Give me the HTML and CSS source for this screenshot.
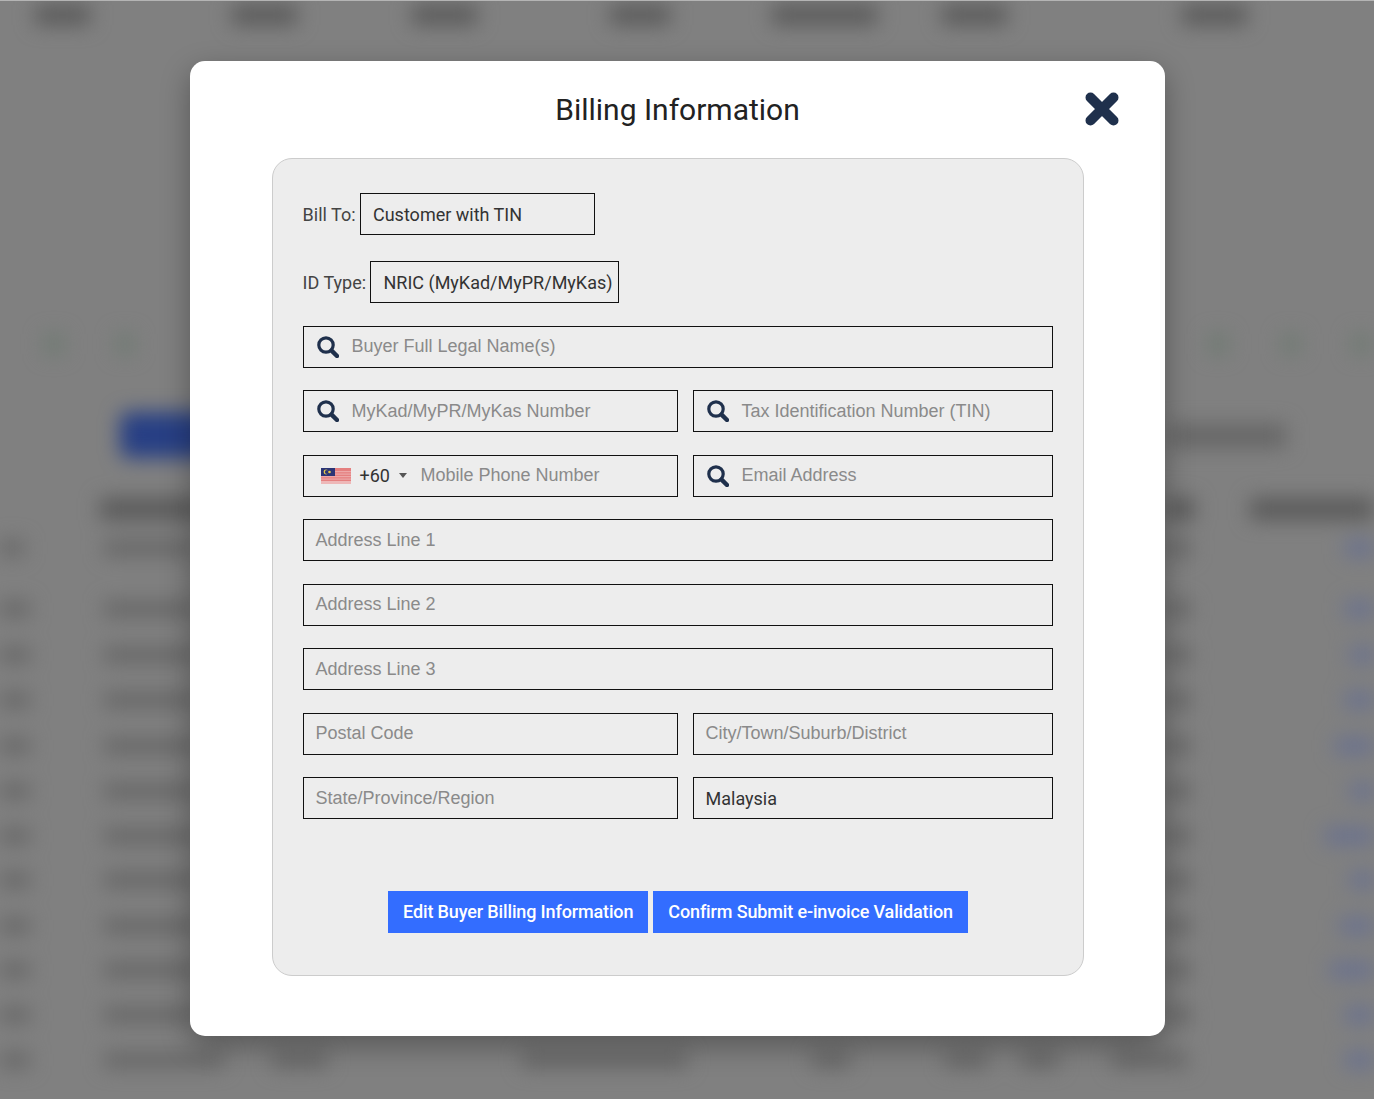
FILE: index.html
```html
<!DOCTYPE html>
<html lang="en">
<head>
<meta charset="utf-8">
<title>Billing Information</title>
<link rel="stylesheet" href="styles.css">
</head>
<body>
<svg class="backdrop" width="1374" height="1099" viewBox="0 0 1374 1099" aria-hidden="true">
  <defs>
    <filter id="soft" x="-10%" y="-10%" width="120%" height="120%" color-interpolation-filters="sRGB"><feGaussianBlur stdDeviation="10"/></filter>
  </defs>
  <rect width="1374" height="1099" fill="#808080"/>
  <g filter="url(#soft)">
    <g fill="#5a5a5a">
      <rect x="35" y="5" width="55" height="20"/><rect x="232" y="5" width="65" height="20"/><rect x="412" y="5" width="65" height="20"/><rect x="610" y="5" width="60" height="20"/><rect x="772" y="5" width="105" height="20"/><rect x="942" y="5" width="65" height="20"/><rect x="1182" y="5" width="65" height="20"/>
      <rect x="100" y="498" width="100" height="22"/><rect x="1165" y="498" width="30" height="22"/><rect x="1250" y="498" width="124" height="22"/>
    </g>
    <rect x="1168" y="424" width="118" height="24" fill="#666"/>
    <g fill="#666">
      <rect x="0" y="540" width="24" height="16"/><rect x="104" y="540" width="90" height="16"/><rect x="1165" y="540" width="26" height="16"/>
      <rect x="0" y="601" width="30" height="16"/><rect x="104" y="601" width="90" height="16"/><rect x="1165" y="601" width="26" height="16"/>
      <rect x="0" y="647" width="30" height="16"/><rect x="104" y="647" width="90" height="16"/><rect x="1165" y="647" width="26" height="16"/>
      <rect x="0" y="692" width="30" height="16"/><rect x="104" y="692" width="90" height="16"/><rect x="1165" y="692" width="26" height="16"/>
      <rect x="0" y="738" width="30" height="16"/><rect x="104" y="738" width="90" height="16"/><rect x="1165" y="738" width="26" height="16"/>
      <rect x="0" y="783" width="30" height="16"/><rect x="104" y="783" width="90" height="16"/><rect x="1165" y="783" width="26" height="16"/>
      <rect x="0" y="828" width="30" height="16"/><rect x="104" y="828" width="90" height="16"/><rect x="1165" y="828" width="26" height="16"/>
      <rect x="0" y="872" width="30" height="16"/><rect x="104" y="872" width="90" height="16"/><rect x="1165" y="872" width="26" height="16"/>
      <rect x="0" y="918" width="30" height="16"/><rect x="104" y="918" width="90" height="16"/><rect x="1165" y="918" width="26" height="16"/>
      <rect x="0" y="962" width="30" height="16"/><rect x="104" y="962" width="90" height="16"/><rect x="1165" y="962" width="26" height="16"/>
      <rect x="0" y="1007" width="30" height="16"/><rect x="104" y="1007" width="90" height="16"/><rect x="1165" y="1007" width="26" height="16"/>
      <rect x="0" y="1052" width="30" height="16"/><rect x="104" y="1052" width="120" height="16"/><rect x="272" y="1052" width="55" height="16"/><rect x="522" y="1052" width="165" height="16"/><rect x="812" y="1052" width="38" height="16"/><rect x="945" y="1052" width="42" height="16"/><rect x="1022" y="1052" width="36" height="16"/><rect x="1112" y="1052" width="76" height="16"/>
    </g>
    <g fill="#68708f">
      <rect x="1345" y="540" width="29" height="16"/><rect x="1345" y="601" width="29" height="16"/><rect x="1350" y="647" width="24" height="16"/><rect x="1345" y="692" width="29" height="16"/><rect x="1335" y="738" width="39" height="16"/><rect x="1350" y="783" width="24" height="16"/><rect x="1325" y="828" width="49" height="16"/><rect x="1350" y="872" width="24" height="16"/><rect x="1340" y="918" width="34" height="16"/><rect x="1330" y="962" width="44" height="16"/><rect x="1345" y="1007" width="29" height="16"/><rect x="1345" y="1052" width="29" height="16"/>
    </g>
    <g fill="#6f7a72">
      <rect x="44" y="334" width="20" height="20"/><rect x="116" y="334" width="18" height="20"/><rect x="1208" y="334" width="20" height="20"/><rect x="1282" y="334" width="18" height="20"/><rect x="1352" y="334" width="18" height="20"/>
    </g>
    <rect x="120" y="412" width="90" height="46" rx="8" fill="#273f84"/>
  </g>
  <rect width="1374" height="1" fill="#b4b4b4"/>
</svg>

<main class="page">
  <section class="modal">
    <h1 class="modal-title">Billing Information</h1>
    <svg class="close" viewBox="0 0 34 34" width="34" height="34" role="img" aria-label="Close">
      <path d="M5.5 5.5 L28.5 28.5 M28.5 5.5 L5.5 28.5"/>
    </svg>

    <div class="panel">
      <div class="select-row select-row-bill">
        <span class="select-label">Bill To:</span>
        <div class="select select-bill">Customer with TIN</div>
      </div>
      <div class="select-row select-row-id">
        <span class="select-label">ID Type:</span>
        <div class="select select-id">NRIC (MyKad/MyPR/MyKas)</div>
      </div>

      <div class="fields">
        <div class="field field-wide field-icon field-name">
          <svg class="search" viewBox="0 0 22 22"><circle cx="9" cy="9" r="7.2"/><line x1="14.6" y1="14.6" x2="20" y2="20"/></svg>
          <span class="placeholder">Buyer Full Legal Name(s)</span>
        </div>
        <div class="field field-icon">
          <svg class="search" viewBox="0 0 22 22"><circle cx="9" cy="9" r="7.2"/><line x1="14.6" y1="14.6" x2="20" y2="20"/></svg>
          <span class="placeholder">MyKad/MyPR/MyKas Number</span>
        </div>
        <div class="field field-icon">
          <svg class="search" viewBox="0 0 22 22"><circle cx="9" cy="9" r="7.2"/><line x1="14.6" y1="14.6" x2="20" y2="20"/></svg>
          <span class="placeholder">Tax Identification Number (TIN)</span>
        </div>
        <div class="field field-phone">
          <svg class="flag" viewBox="0 0 30 16" width="30" height="16">
            <rect width="30" height="16" fill="#e58080"/>
            <rect y="3" width="30" height="1.2" fill="#eda8a8"/>
            <rect y="5.5" width="30" height="1.2" fill="#eda8a8"/>
            <rect y="8" width="30" height="1.2" fill="#eda8a8"/>
            <rect y="10.5" width="30" height="1.2" fill="#eda8a8"/>
            <rect y="13" width="30" height="3" fill="#eeb8b8"/>
            <rect width="14" height="8" fill="#2b3576"/>
            <circle cx="5" cy="4" r="2.4" fill="#e6c84a"/>
            <circle cx="6" cy="4" r="2.1" fill="#2b3576"/>
            <circle cx="8.5" cy="4" r="1.3" fill="#e6c84a"/>
          </svg>
          <span class="dial">+60</span>
          <span class="caret"></span>
          <span class="placeholder">Mobile Phone Number</span>
        </div>
        <div class="field field-icon">
          <svg class="search" viewBox="0 0 22 22"><circle cx="9" cy="9" r="7.2"/><line x1="14.6" y1="14.6" x2="20" y2="20"/></svg>
          <span class="placeholder">Email Address</span>
        </div>
        <div class="field field-wide"><span class="placeholder">Address Line 1</span></div>
        <div class="field field-wide"><span class="placeholder">Address Line 2</span></div>
        <div class="field field-wide"><span class="placeholder">Address Line 3</span></div>
        <div class="field"><span class="placeholder">Postal Code</span></div>
        <div class="field"><span class="placeholder">City/Town/Suburb/District</span></div>
        <div class="field"><span class="placeholder">State/Province/Region</span></div>
        <div class="field"><span class="value">Malaysia</span></div>
      </div>

      <div class="actions">
        <button class="btn" type="button">Edit Buyer Billing Information</button>
        <button class="btn" type="button">Confirm Submit e-invoice Validation</button>
      </div>
    </div>
  </section>
</main>
</body>
</html>
```

FILE: styles.css
```css
* { box-sizing: border-box; }

html, body {
  margin: 0;
  height: 1099px;
  overflow: hidden;
  background: #808080;
}

body {
  font-family: Roboto, "Liberation Sans", sans-serif;
  font-size: 18px;
  color: #333;
}

.backdrop {
  position: absolute;
  top: 0;
  left: 0;
  display: block;
}

.page {
  position: relative;
  padding: 61px 209px 0 190px;
}

.modal {
  position: relative;
  width: 975px;
  height: 975px;
  padding-top: 97px;
  background: #fff;
  border-radius: 15px;
  box-shadow: 0 10px 30px rgba(0, 0, 0, 0.32);
}

.modal-title {
  position: absolute;
  top: 29px;
  left: 0;
  right: 0;
  margin: 0;
  text-align: center;
  font-size: 30px;
  line-height: 40px;
  font-weight: 400;
  color: #222;
}

.close {
  position: absolute;
  top: 31px;
  left: 895px;
  fill: none;
  stroke: #1f304c;
  stroke-width: 10;
  stroke-linecap: round;
}

.panel {
  width: 812px;
  height: 818px;
  margin-left: 82px;
  padding: 34px 30px 0;
  background: #ededed;
  border: 1px solid #ccc;
  border-radius: 20px;
}

.select-row {
  display: flex;
  align-items: center;
  gap: 4px;
}

.select-row-bill { margin-bottom: 26px; }
.select-row-id { margin-bottom: 23px; }

.select {
  height: 42px;
  display: flex;
  align-items: center;
  border: 1px solid #111;
  padding-left: 12.4px;
  white-space: nowrap;
  color: #333;
}

.select-bill { width: 235px; }
.select-id { width: 249px; }
.select-label { color: #444; margin-left: -0.4px; }

.fields {
  display: grid;
  grid-template-columns: 375px 360px;
  column-gap: 15px;
  row-gap: 22.45px;
  width: 750px;
}

.field {
  height: 42px;
  display: flex;
  align-items: center;
  padding-left: 11.5px;
  border: 1px solid #111;
  white-space: nowrap;
}

.field-wide { grid-column: 1 / -1; }

.field-icon { padding-left: 13px; }

.search {
  width: 22px;
  height: 22px;
  margin-right: 12.5px;
  fill: none;
  stroke: #1f304c;
  stroke-width: 3.2;
  stroke-linecap: round;
  flex: none;
}

.search line { stroke-width: 4.4; }

.placeholder {
  font-family: "Liberation Sans", Arial, sans-serif;
  color: #8a8a8a;
}

.field-name .placeholder {
  position: relative;
  top: -1px;
}

.value { color: #333; }

.field-phone { padding-left: 17px; }

.flag {
  flex: none;
  margin-right: 8.5px;
}

.dial { color: #333; }

.caret {
  width: 0;
  height: 0;
  margin: 0 13px 0 9.5px;
  border-left: 4px solid transparent;
  border-right: 4px solid transparent;
  border-top: 5px solid #555;
}

.actions {
  display: flex;
  justify-content: center;
  gap: 5px;
  margin-top: 72px;
}

.btn {
  height: 42px;
  padding: 0 15px 2px;
  border: 0;
  background: #336dff;
  color: #fff;
  font: 500 18px Roboto, "Liberation Sans", sans-serif;
  letter-spacing: -0.14px;
  white-space: nowrap;
}
```
